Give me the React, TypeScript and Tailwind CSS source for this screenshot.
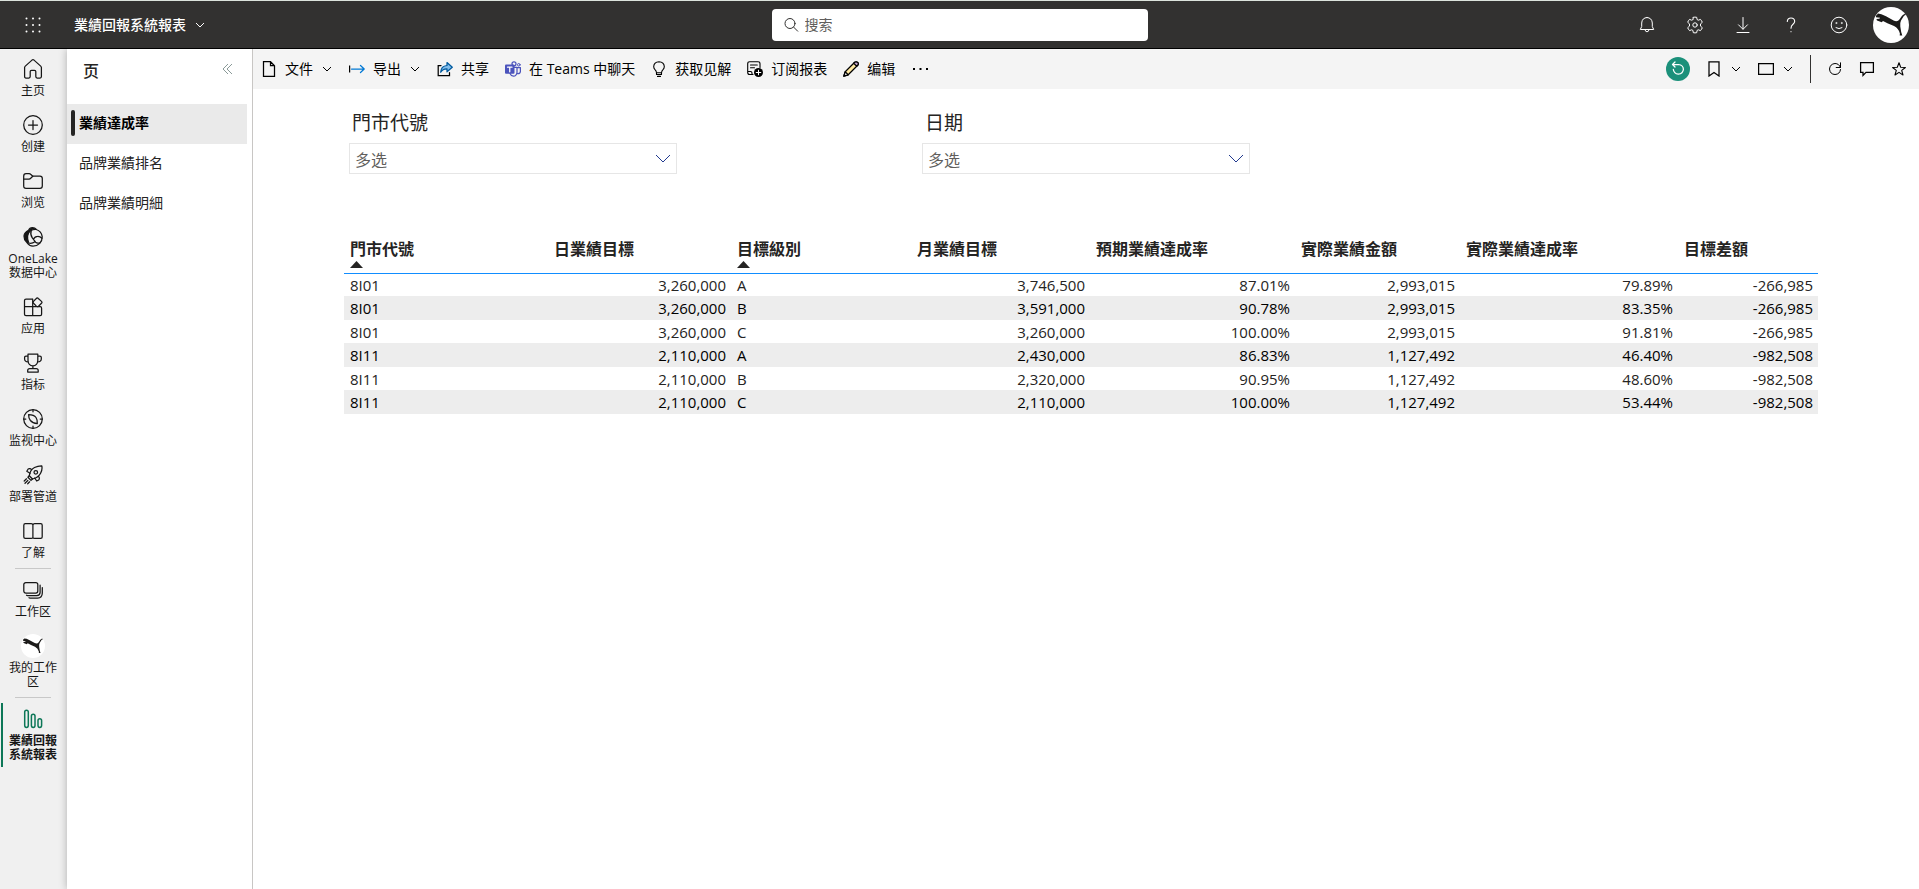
import type { ReactNode } from "react";
import clsx from "clsx";

interface IconProps {
  size?: number;
  className?: string;
  children: ReactNode;
}

const Icon = ({ size = 20, className, children }: IconProps) => (
  <svg
    width={size}
    height={size}
    viewBox={`0 0 ${size} ${size}`}
    fill="none"
    stroke="currentColor"
    strokeWidth="1.25"
    strokeLinecap="round"
    strokeLinejoin="round"
    className={clsx("shrink-0", className)}
    aria-hidden="true"
  >
    {children}
  </svg>
);

const Chevron = ({ className }: { className?: string }) => (
  <svg width="12" height="12" viewBox="0 0 12 12" fill="none" stroke="currentColor" className={clsx("shrink-0", className)} aria-hidden="true">
    <path d="M2 4l4 4 4-4" />
  </svg>
);

const PumaLogo = ({ className }: { className?: string }) => (
  <svg viewBox="0 0 36 36" className={clsx("rounded-full bg-white", className)} aria-hidden="true">
    <path
      fill="#1b1a19"
      d="M3 8.700L4.200 7.600L5 6.600L8.400 7.200L13 9.300L20.600 13.600Q24.600 15.500 26.600 12.200L29 8.800Q30.600 7 33.500 6.500L33.600 7.500L31 8.700L28 13.500Q26.800 16 27.300 19.500L28.200 25L29.300 28.500H26.700L26.900 26.500Q25.500 21 21 19L15 16.500L10 14L8.700 15.300L4 13.500L3.400 12L6.300 11.800L7.200 10.800L3 10.300Z"
    />
  </svg>
);

const HomeIcon = () => (
  <Icon>
    <path d="M1.600 8.600Q1.600 7.700 2.300 7.100L9 1.100Q10 .3 11 1.100L17.700 7.100Q18.400 7.700 18.400 8.600V17.500Q18.400 19 17 19H14.200Q12.800 19 12.800 17.600V12.600Q12.800 11.300 11.500 11.300H8.500Q7.200 11.300 7.200 12.600V17.600Q7.200 19 5.800 19H3Q1.600 19 1.600 17.500Z" />
  </Icon>
);

const CreateIcon = () => (
  <Icon>
    <circle cx="10" cy="10" r="9.300" />
    <path d="M10 5.500v9M5.500 10h9" />
  </Icon>
);

const BrowseIcon = () => (
  <Icon>
    <path d="M.7 5.200Q.7 2.600 3 2.600H6.200Q7 2.600 7.600 3.200L9.800 5.200H17Q19.300 5.200 19.300 7.500V15Q19.300 17.400 17 17.400H3Q.7 17.400 .7 15Z" />
    <path d="M.7 8H6Q7 8 7.700 7.300L9.800 5.200" />
  </Icon>
);

const OneLakeIcon = () => (
  <Icon>
    <path d="M5.600 3.300Q6.500 .8 9.500 .7Q12 .7 13.200 2.300Q10 2 7.700 3.700Q4.800 5.500 4.600 9Q4.300 12 5.500 15.200L3.500 15Q.9 12.700 1 9Q1.300 5.300 5.600 3.300Z" fill="currentColor" />
    <path d="M13.200 2.500Q18.500 4.200 19.200 9.700Q19.300 13.500 16.700 16.400Q14 19.200 10 19.200Q6.200 19 4 15.700" />
    <path d="M8.200 3.700Q7 7.600 9.300 10.800L12.600 15.200Q14.300 16.800 16.800 15.800M10.400 12.200Q12 9.300 14.600 9.300Q17 9.200 19 11.200M4 15.300Q8 17.500 12 14.800" />
  </Icon>
);

const AppsIcon = () => (
  <Icon>
    <path d="M9.500 2H3Q1.500 2 1.500 3.500V9.700H9.700V2M1.500 9.700V17.300Q1.500 18.700 3 18.700H9.700V9.700H17.200Q18.600 9.700 18.600 11.200V17.300Q18.600 18.700 17.200 18.700H9.700" />
    <path d="M13.300 1.500Q14.300 .4 15.300 1.500L18.500 4.400Q19.500 5.300 18.500 6.300L15.500 9.200Q14.400 10 13.400 9.100L10.500 6.300Q9.600 5.300 10.500 4.400Z" fill="#f0f0f0" />
  </Icon>
);

const TrophyIcon = () => (
  <Icon>
    <path d="M5 1H14.800V7.500Q14.500 12.600 9.900 12.900Q5.300 12.600 5 7.500ZM5 3H3Q1.600 3 1.600 4.500V6Q1.700 8.700 5.200 9M14.800 3H16.900Q18.300 3 18.300 4.500V6Q18.200 8.700 14.600 9M9.900 13V15.500M4.700 19V17.500Q4.700 15.500 6.700 15.500H13.200Q15.200 15.500 15.200 17.500V19Z" />
  </Icon>
);

const MonitorIcon = () => (
  <Icon>
    <circle cx="10" cy="10" r="9.300" />
    <path d="M10 .8v2M10 17.200v2M.8 10h2M17.200 10h2M5.600 5.500Q11 5.500 13 8.500Q14.700 11 14.300 14.600Q9.500 14 7.400 11.500Q5.500 9 5.600 5.500Z" />
  </Icon>
);

const RocketIcon = () => (
  <Icon>
    <path d="M6.300 10.700Q7 5 11.500 2.500Q15 .8 18.800 .9Q19.600 4.500 17.600 8.300Q15 13 9.500 14Z" />
    <circle cx="12.800" cy="7.300" r="1.800" />
    <path d="M8.700 4.500L7 3.600Q5.800 3.300 5 4.200L3.800 6.200L7 8.300M15.500 11.300L16.400 13Q16.500 14.200 15.700 15L13.700 16L11.700 13M6.300 10.700L4.900 12.200L8 15.400L9.500 14M3.500 13.800L1.200 16M4.800 15.500L2 18.300M6.600 16.800L4.700 18.800" />
  </Icon>
);

const LearnIcon = () => (
  <Icon>
    <path d="M9.900 4Q9.700 2.700 8.200 2.700H2.300Q.8 2.700 .8 4.200V16Q.8 17.400 2.300 17.400H8.200Q9.500 17.400 9.900 16.400V4Q10.200 2.700 11.600 2.700H17.700Q19.200 2.700 19.200 4.200V16Q19.200 17.400 17.700 17.400H11.600Q10.300 17.400 9.900 16.400" />
  </Icon>
);

const WorkspaceIcon = () => (
  <Icon>
    <rect x=".8" y="2.600" width="14" height="10.500" rx="2" />
    <path d="M3.500 15.200Q4.400 15.700 5.500 15.700H13.800Q17 15.500 17.100 12.500V5.200M6 17.700Q7 18.200 8 18.200H14.600Q19.200 17.800 19.300 13V7.500" />
  </Icon>
);

const ReportIcon = () => (
  <Icon className="text-[#0d7757]">
    <rect x="1.700" y="1.200" width="3.600" height="17.200" rx="1.800" strokeWidth="1.500" />
    <rect x="8.400" y="5.200" width="3.600" height="13.200" rx="1.800" strokeWidth="1.500" />
    <rect x="15" y="9.700" width="3.600" height="8.700" rx="1.800" strokeWidth="1.500" />
  </Icon>
);

interface NavItem {
  label: string;
  icon: ReactNode;
  active?: boolean;
  divider?: boolean;
}

const navItems: NavItem[] = [
  { label: "主页", icon: <HomeIcon /> },
  { label: "创建", icon: <CreateIcon /> },
  { label: "浏览", icon: <BrowseIcon /> },
  { label: "OneLake 数据中心", icon: <OneLakeIcon /> },
  { label: "应用", icon: <AppsIcon /> },
  { label: "指标", icon: <TrophyIcon /> },
  { label: "监视中心", icon: <MonitorIcon /> },
  { label: "部署管道", icon: <RocketIcon /> },
  { label: "了解", icon: <LearnIcon />, divider: true },
  { label: "工作区", icon: <WorkspaceIcon /> },
  { label: "我的工作区", icon: <PumaLogo className="size-6 shrink-0" />, divider: true },
  { label: "業績回報系統報表", icon: <ReportIcon />, active: true },
];

const pages = ["業績達成率", "品牌業績排名", "品牌業績明細"];

const columns = [
  { label: "門市代號", width: "w-[204px]", sorted: true },
  { label: "日業績目標", width: "w-[183px]", numeric: true },
  { label: "目標級別", width: "w-[180px]", sorted: true },
  { label: "月業績目標", width: "w-[179px]", numeric: true },
  { label: "預期業績達成率", width: "w-[205px]", numeric: true },
  { label: "實際業績金額", width: "w-[165px]", numeric: true },
  { label: "實際業績達成率", width: "w-[218px]", numeric: true },
  { label: "目標差額", width: "w-[140px]", numeric: true },
];

const rows = [
  ["8I01", "3,260,000", "A", "3,746,500", "87.01%", "2,993,015", "79.89%", "-266,985"],
  ["8I01", "3,260,000", "B", "3,591,000", "90.78%", "2,993,015", "83.35%", "-266,985"],
  ["8I01", "3,260,000", "C", "3,260,000", "100.00%", "2,993,015", "91.81%", "-266,985"],
  ["8I11", "2,110,000", "A", "2,430,000", "86.83%", "1,127,492", "46.40%", "-982,508"],
  ["8I11", "2,110,000", "B", "2,320,000", "90.95%", "1,127,492", "48.60%", "-982,508"],
  ["8I11", "2,110,000", "C", "2,110,000", "100.00%", "1,127,492", "53.44%", "-982,508"],
];

const Header = () => (
  <header className="relative z-20 grid h-[49px] grid-cols-[1fr_376px_1fr] items-center border-t border-b border-t-[#dce3dc] border-b-black bg-[#323130] text-white">
    <div className="flex items-center">
      <button aria-label="应用启动器" className="flex w-[66px] justify-center">
        <svg width="16" height="16" viewBox="0 0 16 16" fill="currentColor" aria-hidden="true">
          {[1.5, 8, 14.5].map((y) => [1.5, 8, 14.5].map((x) => <circle key={`${x}-${y}`} cx={x} cy={y} r="1" />))}
        </svg>
      </button>
      <button className="flex items-center gap-2 pl-2 text-sm font-medium">
        業績回報系統報表
        <Chevron />
      </button>
    </div>
    <label className="flex h-8 items-center gap-1 rounded bg-white pr-3 pl-[11px] text-black">
      <Icon size={16} className="text-[#323130]">
        <circle cx="7" cy="6.500" r="5" strokeWidth="1" />
        <path d="M10.700 10.200l4 4" strokeWidth="1" />
      </Icon>
      <input type="search" placeholder="搜索" aria-label="搜索" className="min-w-0 flex-1 pl-0.5 text-sm outline-none placeholder:text-[#605e5c]" />
    </label>
    <div className="flex items-center justify-end pr-2.5">
      <button aria-label="通知" className="flex w-12 justify-center">
        <Icon size={18}>
          <path d="M9 1.500Q4 1.800 3.700 7V10.500L2.300 13.500H15.700L14.300 10.500V7Q14 1.800 9 1.500ZM7 13.800Q7.300 15.800 9 15.800T11 13.800" strokeWidth="1" />
        </Icon>
      </button>
      <button aria-label="设置" className="flex w-12 justify-center">
        <Icon size={18}>
          <path d="M7.300 1.300Q9 .9 10.700 1.300L11.100 3.600L12.300 4.200L14.500 3.400Q15.700 4.700 16.300 6.300L14.500 7.900V10.100L16.300 11.700Q15.700 13.300 14.500 14.600L12.300 13.800L11.100 14.400L10.700 16.700Q9 17.100 7.300 16.700L6.900 14.400L5.700 13.800L3.500 14.600Q2.300 13.300 1.700 11.700L3.500 10.100V7.900L1.700 6.300Q2.300 4.700 3.500 3.400L5.700 4.200L6.900 3.600Z" strokeWidth="1" />
          <circle cx="9" cy="9" r="2.200" strokeWidth="1" />
        </Icon>
      </button>
      <button aria-label="下载" className="flex w-12 justify-center">
        <Icon size={18}>
          <path d="M9 1.500V13M4.500 8.800L9 13.300L13.500 8.800M3 16.500H15" strokeWidth="1" />
        </Icon>
      </button>
      <button aria-label="帮助" className="flex w-12 justify-center">
        <Icon size={18}>
          <path d="M5.300 5.500Q5.500 2 9 2T12.700 5.300Q12.700 7 11 8.300Q9 9.800 9 12.300M9 15.500V15.700" strokeWidth="1.100" />
        </Icon>
      </button>
      <button aria-label="反馈" className="flex w-12 justify-center">
        <Icon size={18}>
          <circle cx="9" cy="9" r="7.800" strokeWidth="1" />
          <path d="M6 11.700Q9 13.700 12 11.700" strokeWidth="1" />
          <circle cx="6.300" cy="7" r=".6" fill="currentColor" strokeWidth=".5" />
          <circle cx="11.700" cy="7" r=".6" fill="currentColor" strokeWidth=".5" />
        </Icon>
      </button>
      <button aria-label="帐户" className="ml-2.5">
        <PumaLogo className="size-9" />
      </button>
    </div>
  </header>
);

const NavRail = () => (
  <nav className="flex w-[67px] shrink-0 flex-col items-center bg-[#f0f0f0] pt-px pr-px">
    {navItems.map((item) => (
      <div key={item.label} className="flex w-full flex-col items-center">
        <a href="#" className="relative flex w-full flex-col items-center gap-[5px] px-2 pt-[9px] pb-2 text-[#161616]">
          {item.active && <span className="absolute inset-y-[3px] left-px w-0.5 bg-[#0d7757]" />}
          <span className="flex h-5 items-center justify-center">{item.icon}</span>
          <span className={clsx("text-center text-xs leading-[14px]", item.active && "font-bold")}>{item.label}</span>
        </a>
        {item.divider && <hr className="mb-0.5 w-9 border-[#c8c8c8]" />}
      </div>
    ))}
  </nav>
);

const PagesPane = () => (
  <aside className="relative z-10 w-[186px] shrink-0 border-r border-[#c8c6c4] bg-white shadow-[0_0_8px_rgba(0,0,0,0.28)]">
    <div className="flex h-[55px] items-start justify-between pt-2.5 pr-[15px] pl-4">
      <h2 className="text-base leading-6 font-medium text-[#252423]">页</h2>
      <button aria-label="折叠" className="flex h-5 items-center">
        <svg width="18" height="12" viewBox="0 0 18 12" fill="none" stroke="#8a9a98" aria-hidden="true">
          <path d="M9 1L4 6l5 5M13 1L8 6l5 5" />
        </svg>
      </button>
    </div>
    <ul className="pr-[5px] text-sm text-[#252423]">
      {pages.map((page, index) => (
        <li key={page}>
          <button className={clsx("flex h-10 w-full items-center gap-1 pb-0.5 pl-1", index === 0 && "bg-[#eaeaea] font-bold text-black")}>
            <span className={clsx("h-[26px] w-1 rounded-sm", index === 0 && "bg-[#252423]")} />
            {page}
          </button>
        </li>
      ))}
    </ul>
  </aside>
);

const FileIcon = () => (
  <Icon size={16}>
    <path d="M2.500 .7H9.500L13.500 4.700V15.300H2.500ZM9.500 .7V4.700H13.500" strokeLinejoin="miter" />
  </Icon>
);

const ExportIcon = () => (
  <Icon size={16}>
    <path d="M.6 4.500V11.500" strokeLinecap="butt" />
    <path d="M2.500 8H15M11.500 4.500L15.200 8L11.500 11.500" stroke="#0078d4" />
  </Icon>
);

const ShareIcon = () => (
  <Icon size={16}>
    <path d="M4 4.500H1.200V14.500H12.500V11.500" strokeLinejoin="miter" />
    <path d="M3.700 11.300Q4 5 10 4.500V1.500L15.300 6.200L10 10.800V7.800Q6 7.500 3.700 11.300Z" fill="#83beec" stroke="#005a9e" />
  </Icon>
);

const TeamsIcon = () => (
  <Icon size={16}>
    <circle cx="9" cy="2.800" r="2" stroke="#4b53bc" />
    <circle cx="13.800" cy="3.800" r="1.300" stroke="#4b53bc" strokeWidth="1" />
    <path d="M6 6.300H12V11.500Q11.500 15 8.500 15.200Q6 15 5 12.500M12 6.500H15.400V10.500Q15.200 12.800 12.500 12.700" stroke="#4b53bc" />
    <rect y="3.600" width="9.500" height="9.200" rx="1" fill="#4b53bc" stroke="none" />
    <path d="M2.500 6.200H7M4.750 6.200V10.800" stroke="#fff" />
  </Icon>
);

const BulbIcon = () => (
  <Icon size={16}>
    <path d="M5.500 11.700Q5.300 10 4 8.700Q2.700 7.300 2.700 5.500Q3 .9 8 .7Q13 .9 13.300 5.500Q13.300 7.300 12 8.700Q10.700 10 10.500 11.700ZM5.500 11.700V13.500H10.500V11.700M6.500 15.400H9.500" strokeWidth="1.100" />
  </Icon>
);

const SubscribeIcon = () => (
  <Icon size={16}>
    <path d="M6 13.500H2.700Q.7 13.500 .7 11.500V2.700Q.7 .8 2.700 .8H11Q13 .8 13 2.700V6.500M3.500 4H10.300M3.500 6.700H7.500M.7 10.500H3.500Q5 10.500 5 12V13.500" strokeWidth="1.100" />
    <circle cx="11.500" cy="11.500" r="4.500" fill="currentColor" stroke="none" />
    <path d="M11.500 9.200V13.800M9.200 11.500H13.800" stroke="#fff" strokeWidth="1" />
  </Icon>
);

const PencilIcon = () => (
  <Icon size={16}>
    <path d="M.8 15.200L2.200 10.800L11.700 1.300Q13.200 .2 14.700 1.400Q15.900 2.800 14.700 4.300L5.200 13.800Z" fill="#ffe8a0" />
    <path d="M10.700 2.300L11.700 1.300Q13.200 .2 14.700 1.400Q15.900 2.800 14.700 4.300L13.700 5.300Z" fill="#c5a5cf" />
    <path d="M2.200 10.800L5.200 13.800L.8 15.200Z" fill="#e8e8e8" />
  </Icon>
);

const actions = [
  { label: "文件", icon: <FileIcon />, menu: true },
  { label: "导出", icon: <ExportIcon />, menu: true },
  { label: "共享", icon: <ShareIcon /> },
  { label: "在 Teams 中聊天", icon: <TeamsIcon /> },
  { label: "获取见解", icon: <BulbIcon /> },
  { label: "订阅报表", icon: <SubscribeIcon /> },
  { label: "编辑", icon: <PencilIcon /> },
];

const Toolbar = () => (
  <div className="flex h-10 items-center justify-between bg-[#f4f4f4] pr-3 pl-2 text-sm text-black">
    <div className="flex items-center gap-4">
      {actions.map((action) => (
        <button key={action.label} className="flex items-center gap-2 whitespace-nowrap">
          {action.icon}
          {action.label}
          {action.menu && <Chevron />}
        </button>
      ))}
      <button aria-label="更多选项" className="px-0.5">
        <svg width="16" height="4" viewBox="0 0 16 4" fill="currentColor" aria-hidden="true">
          <path d="M0 1h2v2H0zM6.500 1h2v2h-2zM13 1h2v2h-2z" />
        </svg>
      </button>
    </div>
    <div className="flex items-center">
      <button aria-label="重置" className="mr-4 flex size-6 items-center justify-center rounded-full bg-[#1b907a] text-white">
        <Icon size={16}>
          <path d="M2.500 3.500H8.500Q13.200 4 13.400 8.300Q13 12.800 8.300 13.200Q3.800 12.800 3.300 8.300M5 1L2.500 3.500L5 6" />
        </Icon>
      </button>
      <button aria-label="书签" className="flex items-center gap-2">
        <Icon size={16}>
          <path d="M3 .8H13V15L8 11.500L3 15Z" strokeLinejoin="miter" />
        </Icon>
        <Chevron />
      </button>
      <button aria-label="视图" className="ml-4 flex items-center gap-2">
        <Icon size={16}>
          <path d="M.6 2.600H15.400V13.400H.6Z" strokeLinejoin="miter" />
        </Icon>
        <Chevron />
      </button>
      <span className="mr-4 ml-4 h-7 w-px bg-[#323130]" />
      <button aria-label="刷新" className="mr-4">
        <Icon size={16}>
          <path d="M13.500 6.500Q12 2.500 8 2.500Q3 3 2.500 8Q3 13.300 8 13.500Q13 13.300 13.500 8.500M13.500 1.800V6.500H9.200" strokeWidth="1" />
        </Icon>
      </button>
      <button aria-label="注释" className="mr-4">
        <Icon size={16}>
          <path d="M1.600 1.600H14.400V11.400H7L4 14.400V11.400H1.600Z" strokeLinejoin="miter" />
        </Icon>
      </button>
      <button aria-label="收藏">
        <Icon size={16}>
          <path d="M8 1.800L9.700 6.300L14.400 6.500L10.700 9.400L12 14L8 11.400L4 14L5.300 9.400L1.600 6.500L6.300 6.300Z" strokeWidth="1.100" />
        </Icon>
      </button>
    </div>
  </div>
);

const Slicer = ({ id, title }: { id: string; title: string }) => (
  <div className="w-[328px]">
    <label htmlFor={id} className="block pl-[3px] text-[19px] leading-7 text-[#252423]">
      {title}
    </label>
    <div className="relative mt-1.5">
      <select id={id} className="h-[31px] w-full appearance-none border border-[#e6e6e6] bg-white px-[5px] pt-0.5 text-base text-[#605e5c]">
        <option>多选</option>
      </select>
      <svg width="16" height="10" viewBox="0 0 16 10" fill="none" stroke="#213a8f" className="pointer-events-none absolute top-[11px] right-1.5" aria-hidden="true">
        <path d="M1 1l7 7 7-7" />
      </svg>
    </div>
  </div>
);

const ReportTable = () => (
  <table className="w-full table-fixed border-collapse text-[15px] text-[#252423]">
    <thead>
      <tr className="h-[41px] border-b border-[#118dff]">
        {columns.map((column) => (
          <th key={column.label} className={clsx("px-1.5 pt-[5px] text-left align-top text-base leading-6 font-bold whitespace-nowrap", column.width)}>
            {column.label}
            {column.sorted && (
              <svg width="13" height="7" viewBox="0 0 13 7" fill="#252423" className="block" aria-hidden="true">
                <path d="M6.500 0L13 7H0z" />
              </svg>
            )}
          </th>
        ))}
      </tr>
    </thead>
    <tbody>
      {rows.map((row, rowIndex) => (
        <tr key={rowIndex} className="h-[23px] even:h-6 even:bg-[#ededed] even:text-black">
          {row.map((value, index) => (
            <td key={columns[index].label} className={clsx("pl-1.5 leading-[22px]", columns[index].numeric ? "pr-[5px] text-right" : "pr-1.5")}>
              {value}
            </td>
          ))}
        </tr>
      ))}
    </tbody>
  </table>
);

const App = () => {
  return (
    <div className="flex min-h-screen flex-col bg-white font-['Open_Sans','Noto_Sans_CJK_SC',sans-serif]">
      <Header />
      <div className="flex flex-1">
        <NavRail />
        <PagesPane />
        <main className="relative z-10 min-w-0 flex-1 bg-white">
          <Toolbar />
          <div className="pt-5 pr-[101px] pl-[91px]">
            <div className="flex gap-[245px] pl-[5px]">
              <Slicer id="store" title="門市代號" />
              <Slicer id="date" title="日期" />
            </div>
            <div className="mt-[58px]">
              <ReportTable />
            </div>
          </div>
        </main>
      </div>
    </div>
  );
};

export default App;
